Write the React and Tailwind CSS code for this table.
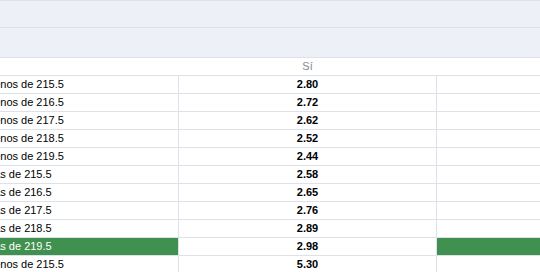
import React from "react";

const rows = [
  ["Menos de 215.5", "2.80"],
  ["Menos de 216.5", "2.72"],
  ["Menos de 217.5", "2.62"],
  ["Menos de 218.5", "2.52"],
  ["Menos de 219.5", "2.44"],
  ["Más de 215.5", "2.58"],
  ["Más de 216.5", "2.65"],
  ["Más de 217.5", "2.76"],
  ["Más de 218.5", "2.89"],
  ["Más de 219.5", "2.98", true],
  ["Menos de 215.5", "5.30"],
];

export default function App() {
  return (
    <div
      className="w-[540px] h-[272px] overflow-hidden bg-white text-[11px] text-black"
      style={{ fontFamily: '"Liberation Sans", Arial, sans-serif' }}
    >
      <div className="h-[28px] bg-[#edf0f7] border-t border-b border-[#dde1ea]" />
      <div className="h-[30px] bg-[#edf0f7] border-b border-[#dde1ea]" />
      <div className="ml-[-23px] w-[700px]">
        <div className="flex h-[18px] border-b border-[#dde1ea]">
          <div className="w-[202px]" />
          <div className="w-[257px] flex items-center justify-center text-[#8a8a8a] leading-none">
            Sí
          </div>
          <div className="flex-1" />
        </div>
        {rows.map(([label, val, hl], i) => (
          <div key={i} className="flex h-[18px] border-b border-[#dde1ea]">
            <div
              className={
                hl
                  ? "w-[202px] border-r border-[#dde1ea] bg-[#40914f] text-white flex items-center pl-[8px] leading-none"
                  : "w-[202px] border-r border-[#dde1ea] flex items-center pl-[8px] leading-none"
              }
            >
              {label}
            </div>
            <div className="w-[258px] border-r border-[#dde1ea] flex items-center justify-center font-bold leading-none">
              {val}
            </div>
            <div className={hl ? "flex-1 bg-[#40914f]" : "flex-1"} />
          </div>
        ))}
      </div>
    </div>
  );
}
